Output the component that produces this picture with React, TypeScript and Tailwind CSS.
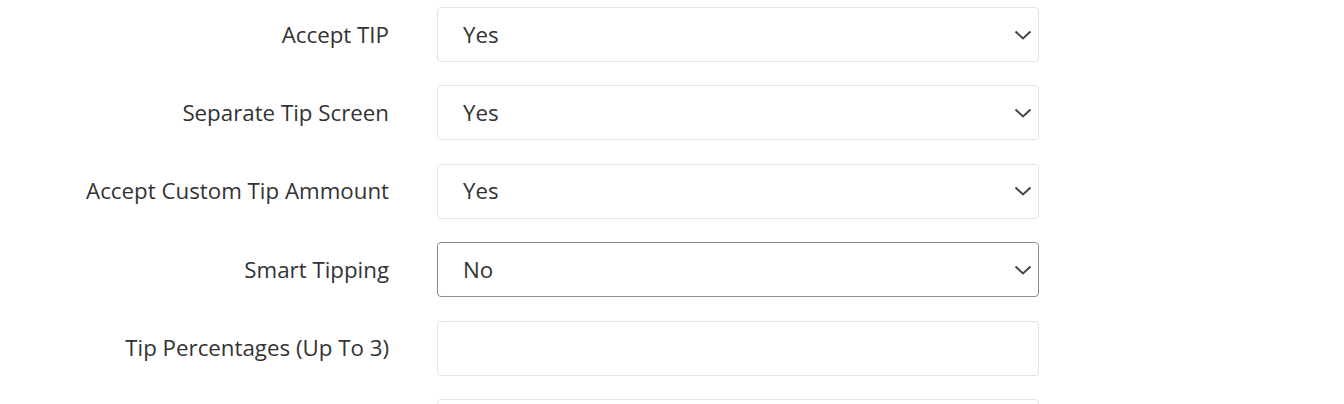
import React from "react";

const Chevron = () => (
  <svg width="18" height="10" viewBox="0 0 18 10" className="shrink-0">
    <path d="M1.5 1.5 L9 8.5 L16.5 1.5" fill="none" stroke="#444" strokeWidth="2" />
  </svg>
);

type Row = { label: string; value?: string; select: boolean; focused?: boolean };

const rows: Row[] = [
  { label: "Accept TIP", value: "Yes", select: true },
  { label: "Separate Tip Screen", value: "Yes", select: true },
  { label: "Accept Custom Tip Ammount", value: "Yes", select: true },
  { label: "Smart Tipping", value: "No", select: true, focused: true },
  { label: "Tip Percentages (Up To 3)", select: false },
  { label: "", select: false },
];

export default function App() {
  return (
    <div
      className="w-[1344px] h-[404px] overflow-hidden bg-white pt-[7px]"
      style={{ fontFamily: '"Open Sans", sans-serif' }}
    >
      <div className="flex flex-col gap-[23.4px]">
        {rows.map((r, i) => (
          <div key={i} className="flex items-center h-[55px]">
            <div className="w-[389px] text-right text-[22.3px] leading-[30px] text-[#333]">{r.label}</div>
            <div
              className={`ml-[48px] w-[602px] h-[55px] rounded-[4px] border bg-white flex items-center pl-[25px] pr-[6px] ${
                r.focused ? "border-[#8c8c8c]" : "border-[#e3e3e3]"
              }`}
            >
              <span className="flex-1 text-[22.3px] leading-[30px] text-[#333]">{r.value ?? ""}</span>
              {r.select && <Chevron />}
            </div>
          </div>
        ))}
      </div>
    </div>
  );
}
